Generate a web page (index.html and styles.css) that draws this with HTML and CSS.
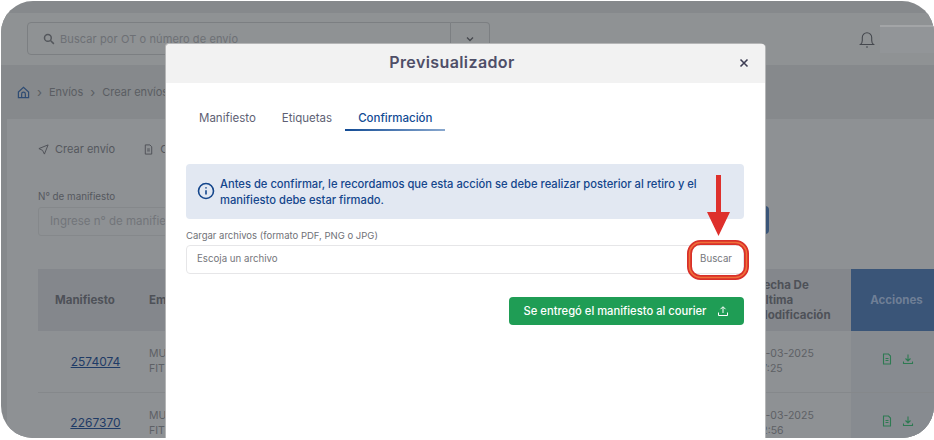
FILE: index.html
```html
<!DOCTYPE html>
<html lang="es">
<head>
<meta charset="utf-8">
<title>Previsualizador</title>
<link rel="stylesheet" href="styles.css">
</head>
<body>
<div class="screen">
  <div class="app">
    <header class="topbar">
      <div class="search">
        <div class="search-input">
          <svg class="search-icon" viewBox="0 0 16 16"><circle cx="6.500" cy="6.500" r="4.500"/><path d="M10 10l4.500 4.500"/></svg>
          <span>Buscar por OT o número de envío</span>
        </div>
        <div class="search-drop"><svg viewBox="0 0 10 10"><path d="M2 3.500l3 3 3-3"/></svg></div>
      </div>
      <div class="top-right">
        <svg class="bell" viewBox="0 0 16 18"><path d="M1.500 13.500h13c-1.200-1-1.800-2-1.800-4V6.500a4.700 4.700 0 0 0-9.400 0v3c0 2-.6 3-1.800 4z"/><path d="M7 16h2"/></svg>
        <div class="user-box"></div>
      </div>
    </header>
    <nav class="crumbs">
      <svg class="home" viewBox="0 0 14 14"><path d="M1.500 6.500L7 1.500l5.500 5v6h-11z"/><path d="M5 12.500V8.500a2 2 0 0 1 4 0v4"/></svg>
      <span class="sep">›</span><span>Envíos</span><span class="sep">›</span><span>Crear envíos</span>
    </nav>
    <main class="card">
      <div class="actions">
        <span class="action"><svg viewBox="0 0 12 12"><path d="M11 1L1 5l4 2 2 4z"/></svg>Crear envío</span>
        <span class="action"><svg viewBox="0 0 12 12"><path d="M2.500 1h5l2 2v8h-7zM4.500 5.500h3M4.500 7.500h3"/></svg>Crear</span>
      </div>
      <div class="filter">
        <div class="field">
          <label class="field-label">N° de manifiesto</label>
          <div class="field-input">Ingrese n° de manifiesto</div>
        </div>
        <div class="filter-btn"></div>
      </div>
      <table class="grid">
        <thead>
          <tr>
            <th class="c-id">Manifiesto</th>
            <th class="c-em">Empresa</th>
            <th class="c-fill"></th>
            <th class="c-date">Fecha De<br>Última<br>Modificación</th>
            <th class="c-act">Acciones</th>
          </tr>
        </thead>
        <tbody>
          <tr>
            <td class="c-id"><a>2574074</a></td>
            <td class="c-em">MUNDO<br>FITNESS</td>
            <td></td>
            <td class="c-date">11-03-2025<br>17:25</td>
            <td class="c-act">
              <svg class="ico" viewBox="0 0 12 12"><path d="M2.500 1h5l2 2v8h-7zM4.500 5.500h3M4.500 7.500h3"/></svg>
              <svg class="ico" viewBox="0 0 12 12"><path d="M6 1.500v6M3.500 5.500L6 8l2.500-2.500M1.500 8.500v2h9v-2"/></svg>
            </td>
          </tr>
          <tr>
            <td class="c-id"><a>2267370</a></td>
            <td class="c-em">MUNDO<br>FITNESS</td>
            <td></td>
            <td class="c-date">11-03-2025<br>12:56</td>
            <td class="c-act">
              <svg class="ico" viewBox="0 0 12 12"><path d="M2.500 1h5l2 2v8h-7zM4.500 5.500h3M4.500 7.500h3"/></svg>
              <svg class="ico" viewBox="0 0 12 12"><path d="M6 1.500v6M3.500 5.500L6 8l2.500-2.500M1.500 8.500v2h9v-2"/></svg>
            </td>
          </tr>
        </tbody>
      </table>
    </main>

    <section class="modal">
      <div class="modal-head">
        <h2>Previsualizador</h2>
        <svg class="close" viewBox="0 0 10 10"><path d="M1.500 1.500l7 7M8.500 1.500l-7 7"/></svg>
      </div>
      <div class="modal-body">
        <div class="tabs">
          <span class="tab">Manifiesto</span>
          <span class="tab">Etiquetas</span>
          <span class="tab active">Confirmación</span>
        </div>
        <div class="notice">
          <svg class="info" viewBox="0 0 18 18"><circle cx="9" cy="9" r="7.500"/><path d="M9 8.200v4.300M9 5.200v1.300"/></svg>
          <p>Antes de confirmar, le recordamos que esta acción se debe realizar posterior al retiro y el manifiesto debe estar firmado.</p>
        </div>
        <label class="upload-label">Cargar archivos (formato PDF, PNG o JPG)</label>
        <div class="upload">
          <span class="upload-name">Escoja un archivo</span>
          <span class="upload-btn">Buscar</span>
        </div>
        <div class="submit-row">
          <button class="submit">Se entregó el manifiesto al courier
            <svg viewBox="0 0 12 12"><path d="M6 8V2M3.500 4.200L6 1.700l2.500 2.500M1.500 7.500v3h9v-3"/></svg>
          </button>
        </div>
      </div>
    </section>

    <svg class="callout" viewBox="0 0 70 110">
      <path class="arrow" d="M33 2h5v37h9L35.500 63 24 39h9z"/>
      <rect class="ring" x="6.500" y="69.500" width="57" height="35" rx="11"/>
      <rect class="ring-in" x="6.500" y="69.500" width="57" height="35" rx="11"/>
    </svg>
  </div>
</div>
</body>
</html>
```

FILE: styles.css
```css
* { box-sizing: border-box; }
html, body { margin: 0; height: 100%; overflow: hidden; background: #fff; }
body { font-family: Inter, "Liberation Sans", sans-serif; }
.screen { width: 934px; height: 440px; padding: 1px 0 2px 1px; }
.app {
  position: relative;
  width: 933px;
  height: 437px;
  border-radius: 32px;
  overflow: hidden;
  background: #86898c;
  padding-top: 12px;
  color: #55585f;
}
.topbar {
  height: 52px;
  background: #8f9294;
  display: flex;
  align-items: center;
  justify-content: space-between;
  padding: 0 0 0 26px;
}
.search { display: flex; height: 33px; margin-top: -1px; }
.search-input {
  width: 424px;
  border: 1px solid #7c7f82;
  border-radius: 4px 0 0 4px;
  display: flex;
  align-items: center;
  gap: 5px;
  padding-left: 15px;
  font-size: 11px;
  letter-spacing: .1px;
  color: #6d7075;
}
.search-icon { width: 12px; height: 12px; fill: none; stroke: #54575c; stroke-width: 2; }
.search-drop {
  width: 39px;
  border: 1px solid #7c7f82;
  border-left: 0;
  border-radius: 0 4px 4px 0;
  display: flex;
  align-items: center;
  justify-content: center;
}
.search-drop svg { width: 10px; height: 10px; fill: none; stroke: #45484e; stroke-width: 1.300; }
.top-right { display: flex; align-items: center; gap: 5px; }
.bell { width: 16px; height: 18px; fill: none; stroke: #45484e; stroke-width: 1.100; margin-top: 1px; }
.user-box { width: 54px; height: 28px; background: #929598; border-top: 2px solid #a3a5a7; margin-top: -1px; }
.crumbs {
  height: 54px;
  display: flex;
  align-items: center;
  gap: 7px;
  padding-left: 16px;
  font-size: 11px;
  color: #5a5d62;
}
.home { width: 13px; height: 13px; fill: none; stroke: #2f4c73; stroke-width: 1.300; }
.sep { font-size: 13px; }
.card {
  background: #8e9194;
  margin-left: 6px;
  height: 320px;
  padding: 15px 0 0 31px;
}
.actions { display: flex; gap: 28px; height: 30px; font-size: 11px; align-items: center; color: #55585e; }
.action { display: flex; align-items: center; gap: 6px; }
.action svg { width: 11px; height: 11px; fill: none; stroke: #4b4e54; stroke-width: 1; }
.filter { display: flex; margin-top: 26px; height: 60px; }
.field { width: 697px; }
.field-label { display: block; font-size: 9.800px; height: 17px; line-height: 14px; color: #55585e; }
.field-input {
  height: 29px;
  border: 1px solid #85888b;
  border-radius: 3px;
  padding-left: 11px;
  line-height: 27px;
  font-size: 11.500px;
  color: #72757a;
}
.filter-btn { width: 34px; height: 28px; background: #3a5578; border-radius: 4px; margin-top: 16px; }
.grid {
  border-collapse: collapse;
  width: 896px;
  table-layout: fixed;
  margin-top: 19px;
  font-size: 10.500px;
}
.grid th {
  background: #84878c;
  height: 62px;
  text-align: left;
  font-size: 11.500px;
  font-weight: 700;
  color: #4e5158;
  line-height: 15px;
  padding: 0;
  vertical-align: middle;
}
.grid td { height: 61px; border-bottom: 1px solid #85888b; padding: 0; line-height: 15px; color: #5d6065; }
.grid th.c-id { width: 111px; padding-left: 17px; }
.grid td.c-id { text-align: center; font-size: 12px; padding-left: 4px; }
.c-id a { color: #1f3b66; text-decoration: underline; }
.c-em { width: 100px; }
.grid .c-date { width: 94px; }
.grid .c-act { width: 83px; text-align: center; }
.grid th.c-act { background: #3a5578; color: #6f7f96; padding-left: 8px; }
.grid td.c-act { background: #878b90; padding-left: 10px; }
.ico { width: 12px; height: 12px; fill: none; stroke: #2e7a52; stroke-width: 1.100; margin: 0 3px; }
.modal {
  position: absolute;
  left: 165px;
  top: 43px;
  width: 599px;
  height: 420px;
  background: #fff;
  border-radius: 4px 4px 0 0;
  box-shadow: -1px -1px 0 #b5b6b7, 1px 0 0 #b5b6b7;
}
.modal-head {
  height: 39px;
  background: #f2f2f2;
  border-radius: 4px 4px 0 0;
  display: flex;
  align-items: center;
  justify-content: center;
  position: relative;
  padding: 0 27px 4px 0;
}
.modal-head h2 { margin: 0; font-size: 16px; font-weight: 600; color: #4f4f68; letter-spacing: .4px; }
.close { position: absolute; right: 16px; top: 14px; width: 10px; height: 10px; fill: none; stroke: #3f3f55; stroke-width: 1.600; }
.modal-body { padding: 0 21px 0 20px; }
.tabs { display: flex; height: 48px; padding-top: 25px; font-size: 11.500px; color: #5e5f74; }
.tab { height: 23px; padding: 0 13px; line-height: 20px; }
.tab.active { color: #114a94; font-weight: 500; padding-right: 12px; border-bottom: 2px solid; border-image: linear-gradient(90deg, #114a94, #8aa9cf) 1; }
.notice {
  margin-top: 33px;
  height: 55px;
  background: #e2e8f2;
  border-radius: 4px;
  display: flex;
  align-items: center;
  gap: 5px;
  padding: 0 36px 2px 11px;
}
.info { width: 18px; height: 18px; flex: none; fill: none; stroke: #14468c; stroke-width: 1.600; }
.notice p { margin: 2px 0 0; font-size: 11.200px; font-weight: 500; line-height: 16px; color: #14468c; }
.upload-label { display: block; margin-top: 10px; font-size: 9.500px; line-height: 14px; color: #707177; }
.upload {
  margin-top: 2px;
  height: 29px;
  border: 1px solid #e6e6e8;
  border-radius: 4px;
  display: flex;
  align-items: center;
  justify-content: space-between;
  padding: 0 11px 3px 10px;
  font-size: 9.700px;
  color: #75767c;
}
.upload-btn { color: #75767c; }
.submit-row { display: flex; justify-content: flex-end; margin-top: 23px; }
.submit {
  width: 235px;
  height: 28px;
  background: #1f9d55;
  border: 0;
  border-radius: 4px;
  color: #fff;
  font: 500 11.200px Inter, "Liberation Sans", sans-serif;
  display: flex;
  align-items: center;
  justify-content: center;
  gap: 11px;
}
.submit svg { width: 12px; height: 12px; fill: none; stroke: #fff; stroke-width: 1; }
.callout { position: absolute; left: 682px; top: 172px; width: 70px; height: 110px; }
.arrow { fill: #de302c; }
.ring { fill: none; stroke: #d9302a; stroke-width: 5; }
.ring-in { fill: none; stroke: #f0703a; stroke-width: 1.500; }
```
